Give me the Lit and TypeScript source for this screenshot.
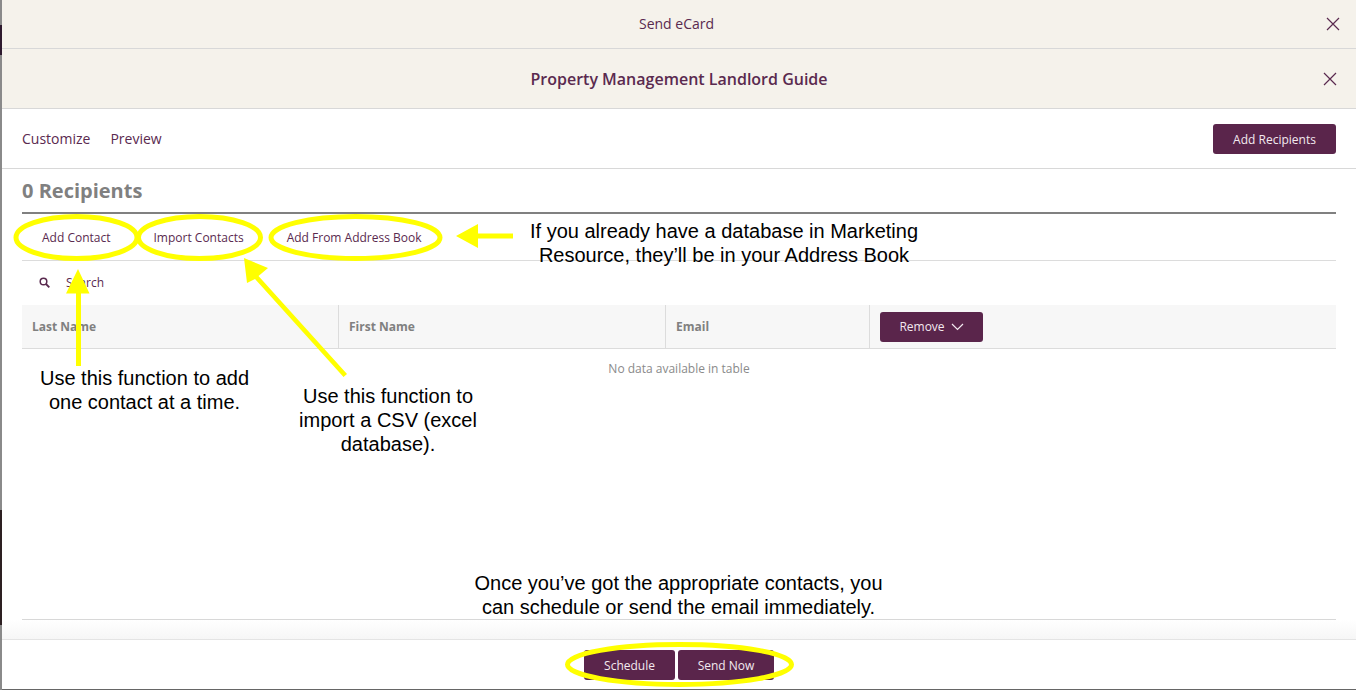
import { LitElement, html, css, svg } from "lit";
import { customElement } from "lit/decorators.js";

const closeIcon = html`<svg class="x" width="14" height="14" viewBox="0 0 14 14"><path d="M1 1L13 13M13 1L1 13" stroke="#5a2a4f" stroke-width="1.200" fill="none"/></svg>`;

const marks = svg`
  <g fill="none" stroke="#ffff00" stroke-width="5">
    <ellipse cx="76.500" cy="237.500" rx="60.500" ry="21"/>
    <ellipse cx="199.500" cy="237.500" rx="61" ry="21"/>
    <ellipse cx="355.500" cy="237.500" rx="84.500" ry="21"/>
    <ellipse cx="679.500" cy="664.500" rx="112" ry="20"/>
  </g>
  <g fill="#ffff00">
    <path d="M78 269L89.500 293.500H81V366H76V293.500H66Z"/>
    <path d="M244 258L268 268L258.500 276L347 374L343.500 377L255 279L247 283Z"/>
    <path d="M456 236L478 224V233.500H513V238.500H478V248Z"/>
  </g>`;

@customElement("app-root")
export class AppRoot extends LitElement {
  static styles = css`
    :host { display: block; position: relative; width: 1356px; height: 690px; overflow: hidden; font-family: "Open Sans", "Noto Sans", sans-serif; color: #5a2a4f; background: #fff; }
    .page { display: flex; height: 690px; }
    .edge { width: 2px; flex: none; background: linear-gradient(#8a8a8a 0 25px, #2e1a2e 25px 55px, #8a8a8a 55px 510px, #2d2022 510px 625px, #8a8a8a 625px); }
    .modal { flex: 1; min-width: 0; display: flex; flex-direction: column; border-bottom: 1px solid #666; }
    .head { background: #f5f2eb; border-bottom: 1px solid #d8d8d8; display: flex; align-items: center; justify-content: center; position: relative; flex: none; box-sizing: content-box; }
    .h1 { height: 46px; font-size: 14px; padding: 0 5px 2px 0; }
    .h2 { height: 59px; font-size: 16px; font-weight: 600; }
    .x { position: absolute; top: 50%; transform: translateY(-50%); }
    .h1 .x { right: 16px; top: 24px; }
    .h2 .x { right: 19px; }
    .nav { height: 59px; flex: none; display: flex; align-items: center; padding: 0 20px; border-bottom: 1px solid #d8d8d8; font-size: 14px; gap: 20px; }
    .nav .btn { margin-left: auto; padding-top: 2px; height: 28px; }
    .btn { background: #5a254b; color: #f3e9ef; border-radius: 3px; font-size: 12px; font-weight: 400; display: inline-flex; align-items: center; justify-content: center; height: 30px; }
    .add { width: 123px; }
    .body { flex: 1; min-height: 0; margin: 0 20px; display: flex; flex-direction: column; }
    h2 { margin: 0; height: 43px; flex: none; display: flex; align-items: center; font-size: 20px; font-weight: 700; color: #808080; border-bottom: 2px solid #808080; padding-bottom: 0; }
    .tabs { height: 46px; flex: none; display: flex; align-items: center; border-bottom: 1px solid #dcdcdc; font-size: 12px; }
    .tabs span { white-space: nowrap; }
    .t1 { margin-left: 20px; }
    .t2, .t3 { margin-left: 43px; }
    .search { height: 44px; flex: none; display: flex; align-items: center; font-size: 12px; padding: 0 0 2px 17px; box-sizing: border-box; gap: 16px; color: #5a2a4f; }
    .thead { height: 43px; flex: none; display: grid; grid-template-columns: 317px 327px 204px 1fr; background: #f7f7f7; border-bottom: 1px solid #dcdcdc; font-size: 12px; font-weight: 700; color: #808080; }
    .thead > div { display: flex; align-items: center; padding-left: 10px; border-right: 1px solid #dcdcdc; }
    .thead > div:last-child { border-right: 0; }
    .remove { width: 103px; gap: 6px; }
    .empty { text-align: center; padding-top: 11px; font-size: 12px; color: #8a8a8a; flex: none; border-bottom: 1px solid #d8d8d8; box-sizing: border-box; height: 271px; }
    .shade { height: 19px; flex: none; background: linear-gradient(#fff, #f6f6f6); margin: 0 -20px; border-bottom: 1px solid #e4e4e4; }
    .foot { flex: 1; display: flex; justify-content: center; align-items: flex-start; padding: 10px 0 0 0; gap: 3px; }
    .foot .btn { height: 30px; }
    .sch { width: 91px; }
    .snd { width: 96px; }
    svg.over { position: absolute; left: 0; top: 0; pointer-events: none; }
    .note { position: absolute; font-family: "Liberation Sans", Arial, sans-serif; font-size: 20px; line-height: 24px; color: #000; text-align: center; white-space: nowrap; transform: translateX(-50%); }
    .n1 { left: 724px; top: 219px; }
    .n2 { left: 144.500px; top: 366px; }
    .n3 { left: 388px; top: 384px; }
    .n4 { left: 678.500px; top: 571px; }
  `;

  render() {
    return html`
      <div class="page">
        <div class="edge"></div>
        <div class="modal">
          <div class="head h1">Send eCard ${closeIcon}</div>
          <div class="head h2">Property Management Landlord Guide ${closeIcon}</div>
          <div class="nav">
            <span>Customize</span><span>Preview</span>
            <span class="btn add">Add Recipients</span>
          </div>
          <div class="body">
            <h2>0 Recipients</h2>
            <div class="tabs">
              <span class="t1">Add Contact</span><span class="t2">Import Contacts</span><span class="t3">Add From Address Book</span>
            </div>
            <div class="search">
              <svg width="11" height="11" viewBox="0 0 11 11"><circle cx="4.500" cy="4.500" r="3.300" fill="none" stroke="#5a2a4f" stroke-width="1.500"/><path d="M7 7L10.300 10.300" stroke="#5a2a4f" stroke-width="1.800"/></svg>
              <span>Search</span>
            </div>
            <div class="thead">
              <div>Last Name</div><div>First Name</div><div>Email</div>
              <div><span class="btn remove">Remove
                <svg width="13" height="8" viewBox="0 0 13 8"><path d="M1 1L6.500 6.500L12 1" fill="none" stroke="#f3e9ef" stroke-width="1.200"/></svg></span></div>
            </div>
            <div class="empty">No data available in table</div>
            <div class="shade"></div>
            <div class="foot">
              <span class="btn sch">Schedule</span><span class="btn snd">Send Now</span>
            </div>
          </div>
        </div>
      </div>
      <svg class="over" width="1356" height="690" viewBox="0 0 1356 690">${marks}</svg>
      <div class="note n1">If you already have a database in Marketing<br>Resource, they’ll be in your Address Book</div>
      <div class="note n2">Use this function to add<br>one contact at a time.</div>
      <div class="note n3">Use this function to<br>import a CSV (excel<br>database).</div>
      <div class="note n4">Once you’ve got the appropriate contacts, you<br>can schedule or send the email immediately.</div>
    `;
  }
}
